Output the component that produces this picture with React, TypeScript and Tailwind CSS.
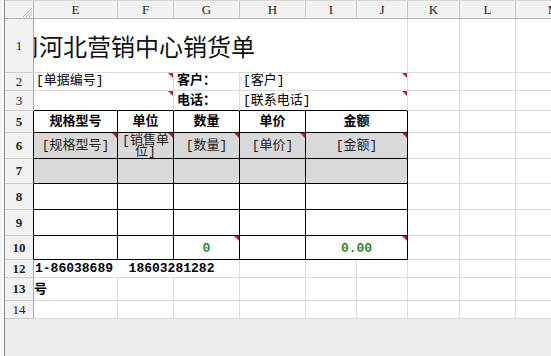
import type { ReactNode } from "react";

const lines = {
  g: "border-r-[#dadada] border-b-[#dadada]",
  k: "border-r-black border-b-black",
  gk: "border-r-[#dadada] border-b-black",
};

const cjk = "font-['Liberation_Mono','Noto_Sans_CJK_SC',monospace]";

function Mark() {
  return (
    <span className="absolute top-0 right-0 w-0 h-0 border-t-[5px] border-l-[5px] border-t-[#b5233b] border-l-transparent" />
  );
}

function Cell({
  w,
  line = "g",
  className = "",
  mark,
  children,
}: {
  w: string;
  line?: keyof typeof lines;
  className?: string;
  mark?: boolean;
  children?: ReactNode;
}) {
  return (
    <div
      className={`relative shrink-0 h-full border-r border-b flex items-center whitespace-nowrap ${w} ${lines[line]} ${className}`}
    >
      {children}
      {mark && <Mark />}
    </div>
  );
}

function RowHead({ n, bold, dark }: { n: string; bold?: boolean; dark?: boolean }) {
  return (
    <div
      className={`shrink-0 w-[29px] h-full bg-[#f2f2f2] border-r border-b border-b-[#cfcfcf] flex items-center justify-center text-[13px] text-[#222] font-['Liberation_Serif',serif] ${
        dark ? "border-r-black" : "border-r-[#a9a9a9]"
      } ${bold ? "font-bold" : ""}`}
    >
      {n}
    </div>
  );
}

// columns K, L, M are empty in every row
function Tail() {
  return (
    <>
      <Cell w="w-[52px]" className="bg-white" />
      <Cell w="w-[56px]" className="bg-white" />
      <Cell w="w-[76px]" className="bg-white" />
    </>
  );
}

const headers: [string, string][] = [
  ["E", "w-[84px]"],
  ["F", "w-[56px]"],
  ["G", "w-[66px]"],
  ["H", "w-[66px]"],
  ["I", "w-[51px]"],
  ["J", "w-[51px]"],
  ["K", "w-[52px]"],
  ["L", "w-[56px]"],
  ["M", "w-[76px]"],
];

export default function App() {
  return (
    <div className="flex w-[551px] h-[356px] overflow-hidden bg-[#f6f6f6]">
      <div className="w-[4px] shrink-0" />
      <div className="flex flex-col flex-1 min-w-0 border-l border-l-[#8c8c8c] bg-[#ececec]">
        {/* column letters */}
        <div className="flex shrink-0 h-[19px] border-t border-t-[#d6d6d6]">
          <div className="relative shrink-0 w-[29px] h-full bg-[#f2f2f2] border-r border-b border-r-[#b4b4b4] border-b-[#b4b4b4]">
            <svg
              width="29"
              height="18"
              viewBox="0 0 29 18"
              className="absolute right-0 bottom-0"
              aria-hidden="true"
            >
              <path
                d="M19 17L28 8M22 17L28 11M25 17L28 14"
                stroke="#b3b3b3"
                strokeWidth="1"
              />
            </svg>
          </div>
          {headers.map(([c, w]) => (
            <div
              key={c}
              className={`shrink-0 h-full bg-[#f2f2f2] border-r border-b border-r-[#c6c6c6] border-b-[#b4b4b4] flex items-center justify-center text-[13px] text-[#222] font-['Liberation_Serif',serif] ${w}`}
            >
              {c}
            </div>
          ))}
        </div>

        {/* row 1 */}
        <div className="flex shrink-0 h-[54px]">
          <RowHead n="1" />
          <Cell w="w-[374px]" className="bg-white overflow-hidden">
            <span className="-ml-[19px] text-[24px] leading-none text-[#111] font-['Noto_Sans_CJK_SC',sans-serif]">
              司河北营销中心销货单
            </span>
          </Cell>
          <Tail />
        </div>

        {/* row 2 */}
        <div className={`flex shrink-0 h-[18px] text-[13px] ${cjk}`}>
          <RowHead n="2" />
          <Cell w="w-[140px]" className="bg-white pl-[2px] items-end" mark>
            [单据编号]
          </Cell>
          <Cell w="w-[66px]" className="bg-white pl-[3px] font-bold items-end">
            客户：
          </Cell>
          <Cell w="w-[168px]" className="bg-white pl-[3px] items-end" mark>
            [客户]
          </Cell>
          <Tail />
        </div>

        {/* row 3 */}
        <div className={`flex shrink-0 h-[20px] text-[13px] ${cjk}`}>
          <RowHead n="3" />
          <Cell w="w-[140px]" line="gk" className="bg-white" mark />
          <Cell w="w-[66px]" line="gk" className="bg-white pl-[3px] font-bold items-end">
            电话：
          </Cell>
          <Cell w="w-[168px]" line="gk" className="bg-white pl-[3px] items-end" mark>
            [联系电话]
          </Cell>
          <Tail />
        </div>

        {/* row 5: table header */}
        <div className={`flex shrink-0 h-[22px] text-[13px] font-bold ${cjk}`}>
          <RowHead n="5" bold dark />
          <Cell w="w-[84px]" line="k" className="bg-white justify-center">
            规格型号
          </Cell>
          <Cell w="w-[56px]" line="k" className="bg-white justify-center">
            单位
          </Cell>
          <Cell w="w-[66px]" line="k" className="bg-white justify-center">
            数量
          </Cell>
          <Cell w="w-[66px]" line="k" className="bg-white justify-center">
            单价
          </Cell>
          <Cell w="w-[102px]" line="k" className="bg-white justify-center">
            金额
          </Cell>
          <Tail />
        </div>

        {/* row 6: field placeholders */}
        <div className={`flex shrink-0 h-[26px] text-[13px] text-[#222] ${cjk}`}>
          <RowHead n="6" bold dark />
          <Cell w="w-[84px]" line="k" className="bg-[#d9d9d9] justify-center" mark>
            [规格型号]
          </Cell>
          <Cell w="w-[56px]" line="k" className="bg-[#d9d9d9] justify-center overflow-hidden" mark>
            <span className="text-center leading-[11px] whitespace-normal">
              [销售单
              <br />
              位]
            </span>
          </Cell>
          <Cell w="w-[66px]" line="k" className="bg-[#d9d9d9] justify-center" mark>
            [数量]
          </Cell>
          <Cell w="w-[66px]" line="k" className="bg-[#d9d9d9] justify-center" mark>
            [单价]
          </Cell>
          <Cell w="w-[102px]" line="k" className="bg-[#d9d9d9] justify-center" mark>
            [金额]
          </Cell>
          <Tail />
        </div>

        {/* rows 7 - 9 */}
        {[
          ["7", "h-[25px]", "bg-[#d9d9d9]"],
          ["8", "h-[26px]", "bg-white"],
          ["9", "h-[26px]", "bg-white"],
        ].map(([n, h, bg]) => (
          <div key={n} className={`flex shrink-0 ${h}`}>
            <RowHead n={n} bold dark />
            <Cell w="w-[84px]" line="k" className={bg} />
            <Cell w="w-[56px]" line="k" className={bg} />
            <Cell w="w-[66px]" line="k" className={bg} />
            <Cell w="w-[66px]" line="k" className={bg} />
            <Cell w="w-[102px]" line="k" className={bg} />
            <Tail />
          </div>
        ))}

        {/* row 10: totals */}
        <div className="flex shrink-0 h-[24px] text-[13px] font-bold text-[#2c862c] font-['Liberation_Mono',monospace]">
          <RowHead n="10" bold dark />
          <Cell w="w-[84px]" line="k" className="bg-white" />
          <Cell w="w-[56px]" line="k" className="bg-white" />
          <Cell w="w-[66px]" line="k" className="bg-white justify-center pt-[2px]" mark>
            0
          </Cell>
          <Cell w="w-[66px]" line="k" className="bg-white" />
          <Cell w="w-[102px]" line="k" className="bg-white justify-center pt-[2px]" mark>
            0.00
          </Cell>
          <Tail />
        </div>

        {/* row 12 */}
        <div className={`flex shrink-0 h-[18px] text-[13px] font-bold ${cjk}`}>
          <RowHead n="12" />
          <Cell w="w-[206px]" className="bg-white pl-[1px] whitespace-pre">
            {"1-86038689  18603281282"}
          </Cell>
          <Cell w="w-[66px]" className="bg-white" />
          <Cell w="w-[51px]" className="bg-white" />
          <Cell w="w-[51px]" className="bg-white" />
          <Tail />
        </div>

        {/* row 13 */}
        <div className={`flex shrink-0 h-[23px] text-[13px] font-bold ${cjk}`}>
          <RowHead n="13" />
          <Cell w="w-[84px]" className="bg-white items-start pt-[2px]">
            号
          </Cell>
          <Cell w="w-[56px]" className="bg-white" />
          <Cell w="w-[66px]" className="bg-white" />
          <Cell w="w-[66px]" className="bg-white" />
          <Cell w="w-[51px]" className="bg-white" />
          <Cell w="w-[51px]" className="bg-white" />
          <Tail />
        </div>

        {/* row 14 */}
        <div className="flex shrink-0 h-[18px]">
          <RowHead n="14" />
          <Cell w="w-[84px]" className="bg-white" />
          <Cell w="w-[56px]" className="bg-white" />
          <Cell w="w-[66px]" className="bg-white" />
          <Cell w="w-[66px]" className="bg-white" />
          <Cell w="w-[51px]" className="bg-white" />
          <Cell w="w-[51px]" className="bg-white" />
          <Tail />
        </div>
      </div>
    </div>
  );
}
